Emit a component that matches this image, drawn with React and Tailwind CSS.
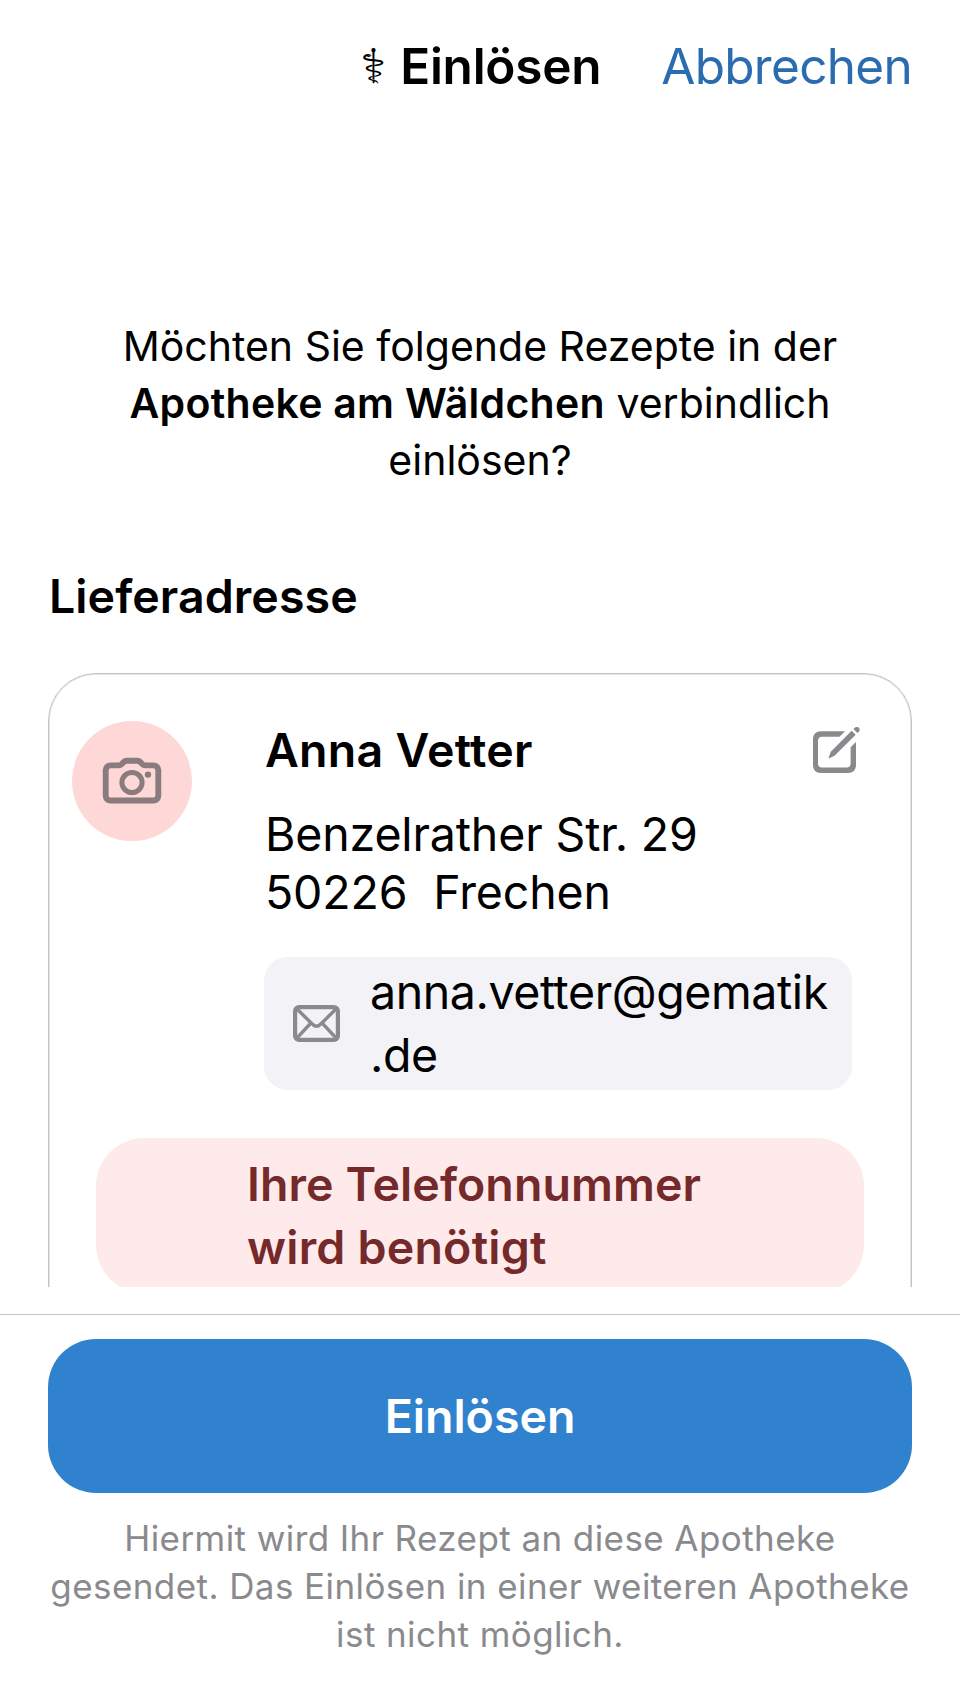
function CameraIcon() {
  return (
    <svg className="mr-px h-12 w-15" viewBox="0 0 60 48" fill="none" aria-hidden="true">
      <path
        d="M8.6 8.4H16.5C18 8.4 18.8 8 19.8 7L21.6 5.2C22.6 4.2 23.4 3.8 25 3.8H35C36.6 3.8 37.4 4.2 38.4 5.2L40.2 7C41.2 8 42 8.4 43.5 8.4H51.4C54.4 8.4 56.3 10.3 56.3 13.3V38.6C56.3 41.6 54.4 43.5 51.4 43.5H8.6C5.6 43.5 3.7 41.6 3.7 38.6V13.3C3.7 10.3 5.6 8.4 8.6 8.4Z"
        stroke="#8a7b7f"
        strokeWidth="5.9"
      />
      <circle cx="30" cy="25.5" r="10.1" stroke="#8a7b7f" strokeWidth="5" />
      <circle cx="46" cy="17.6" r="3.2" fill="#8a7b7f" />
    </svg>
  );
}

function EditIcon() {
  return (
    <svg className="h-12 w-12" viewBox="0 0 48 48" fill="none" aria-hidden="true">
      <path
        d="M32 4.2L26.5 9.7H9C6.6 9.7 5 11.3 5 13.7V36.6C5 39 6.6 40.6 9 40.6H33.6C36 40.6 37.6 39 37.6 36.6V20.3L43 14.9V38C43 43 40 46 35 46H8C3 46 0 43 0 38V12.2C0 7.2 3 4.2 8 4.2Z"
        fill="#8a8a8e"
      />
      <path d="M38.6 3.7L42.7 7.8L21.5 28.8L16.4 31.2C15.9 31.4 15.5 31 15.7 30.5L17.8 24.8Z" fill="#8a8a8e" />
      <path d="M40.4 2L41.8 0.7C43.1 -0.4 44.8 -0.3 45.9 0.8C47 1.9 47 3.6 45.8 4.8L44.4 6.1Z" fill="#8a8a8e" />
    </svg>
  );
}

function MailIcon() {
  return (
    <svg className="h-[37px] w-[47px]" viewBox="0 0 47 37" fill="none" stroke="#8a8a8e" aria-hidden="true">
      <rect x="2.1" y="2.1" width="42.8" height="32.8" rx="4" strokeWidth="4.2" />
      <path d="M3.5 3.5L19.5 19.3C22.2 22 24.8 22 27.5 19.3L43.5 3.5" strokeWidth="3.4" />
      <path d="M3.5 33.5L17.8 18.2M43.5 33.5L29.2 18.2" strokeWidth="3.4" />
    </svg>
  );
}

function Header() {
  return (
    <header className="flex h-[132px] shrink-0 items-center justify-end pr-[48px] text-[49.5px] leading-[60px]">
      <h1 className="mr-[60px] flex items-center font-semibold">
        <span className="mr-[14px] font-['DejaVu_Sans'] text-[48px] leading-[60px] font-normal">⚕</span>
        <span className="tracking-[-0.26px]">Einlösen</span>
      </h1>
      <button className="tracking-[-0.7px] text-[#2b6cb0]">Abbrechen</button>
    </header>
  );
}

function AddressCard() {
  return (
    <div className="mx-12 mt-[49px] h-[700px] rounded-[48px] border border-[#c2c2c4] pt-[47px] shadow-[inset_0_0_0_1px_#e6e6e7]">
      <div className="flex pl-[23px]">
        <div className="flex size-[120px] shrink-0 items-center justify-center rounded-full bg-[#fed7d7]">
          <CameraIcon />
        </div>
        <div className="ml-[72px] w-[588px] text-[46.5px]">
          <div className="mt-px flex h-[56px] items-center justify-between">
            <h3 className="pl-px leading-[56px] font-semibold tracking-[0.28px]">Anna Vetter</h3>
            <div className="mt-0.5 -mr-[9px]">
              <EditIcon />
            </div>
          </div>
          <p className="mt-[27px] pl-px leading-[58px] tracking-[-0.15px] whitespace-pre">
            {"Benzelrather Str. 29\n50226  Frechen"}
          </p>
          <div className="mt-[36px] flex h-[133px] items-center rounded-[24px] bg-[#f2f2f7] pl-[29px]">
            <MailIcon />
            <p className="ml-[30px] leading-[63px] tracking-[-0.42px]">
              anna.vetter@gematik
              <br />
              .de
            </p>
          </div>
        </div>
      </div>
      <div className="mx-[47px] mt-12 flex h-[155px] items-center rounded-[48px] bg-[#ffeaeb] pl-[151px]">
        <p className="text-[46.5px] leading-[63px] font-semibold tracking-[0.08px] text-[#742a2a]">
          Ihre Telefonnummer
          <br />
          <span className="tracking-[0.22px]">wird benötigt</span>
        </p>
      </div>
    </div>
  );
}

export default function App() {
  return (
    <div className="flex h-[1704px] w-[960px] flex-col overflow-hidden bg-white font-['Inter',sans-serif] text-black">
      <Header />
      <main className="h-[1155px] shrink-0 overflow-hidden pt-[186px]">
        <p className="text-center text-[41px] leading-[57px]">
          Möchten Sie folgende Rezepte in der
          <br />
          <span className="font-semibold tracking-[0.28px]">Apotheke am Wäldchen</span> verbindlich
          <br />
          einlösen?
        </p>
        <h2 className="mt-[79px] pl-[49px] text-[46.5px] leading-[56px] font-semibold tracking-[0.08px]">
          Lieferadresse
        </h2>
        <AddressCard />
      </main>
      <footer className="mt-[27px] border-t border-[#c6c6c8] px-12 pt-6">
        <button className="flex h-[154px] w-full items-center justify-center rounded-[48px] bg-[#3182ce] pt-0.5 text-[46.5px] font-semibold text-white">
          Einlösen
        </button>
        <p className="mt-[21px] text-center text-[35px] leading-[48px] tracking-[0.42px] whitespace-nowrap text-[#8a8a8e]">
          Hiermit wird Ihr Rezept an diese Apotheke
          <br />
          gesendet. Das Einlösen in einer weiteren Apotheke
          <br />
          ist nicht möglich.
        </p>
      </footer>
    </div>
  );
}
